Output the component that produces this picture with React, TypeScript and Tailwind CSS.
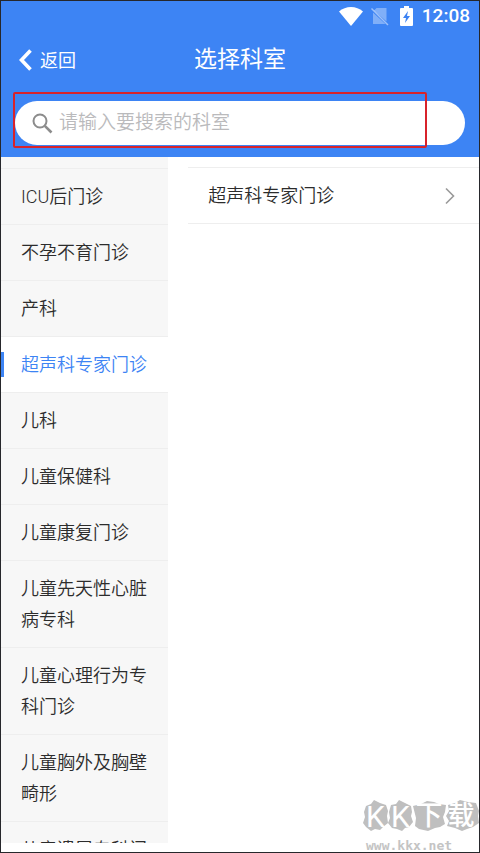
import { useState } from "react";

const departments = [
  "ICU后门诊",
  "不孕不育门诊",
  "产科",
  "超声科专家门诊",
  "儿科",
  "儿童保健科",
  "儿童康复门诊",
  "儿童先天性心脏病专科",
  "儿童心理行为专科门诊",
  "儿童胸外及胸壁畸形",
  "儿童遗尿专科门诊",
];

function StatusBar() {
  return (
    <div className="flex h-[30px] items-center justify-end pr-[9px] text-white">
      <svg width="24" height="19" viewBox="0 0 24 19" fill="currentColor" aria-hidden="true">
        <path d="M0 4.5C3.4 1.6 7.5 0 12 0s8.600 1.600 12 4.500L12 19z" />
      </svg>
      <svg className="ml-2" width="18" height="19" viewBox="0 0 18 19" aria-hidden="true">
        <path d="M5.500 1H15.500V14.500L3 3.500zM2 5.500L14.500 17H2z" fill="#fff" opacity=".35" />
        <path d="M.5 1.500l16.500 16.500" stroke="#fff" strokeWidth="1.400" opacity=".5" />
      </svg>
      <svg className="ml-[11px]" width="13" height="20" viewBox="0 0 13 20" aria-hidden="true">
        <path d="M4 0h5v2h3a1 1 0 0 1 1 1v16a1 1 0 0 1-1 1H1a1 1 0 0 1-1-1V3a1 1 0 0 1 1-1h3z" fill="#fff" />
        <path d="M8 5l-5 7h3l-1 5 5-7H7z" fill="#3c82f3" />
      </svg>
      <span className="ml-[9px] text-[19px] leading-[24px] font-medium">12:08</span>
    </div>
  );
}

function Header() {
  return (
    <header className="shrink-0 bg-[#3d84f4] pb-3">
      <StatusBar />
      <div className="grid h-[58px] grid-cols-3 items-center text-white">
        <button type="button" className="flex items-center gap-2 pl-[18px] text-[18px]">
          <svg width="13" height="24" viewBox="0 0 13 24" fill="none" aria-hidden="true">
            <path d="M11.500 2.500L2.500 12l9 9.500" stroke="currentColor" strokeWidth="3.600" />
          </svg>
          返回
        </button>
        <h1 className="text-center text-[23px]">选择科室</h1>
      </div>
      <div className="relative mx-[14px] mt-3">
        <label className="flex h-11 items-center gap-1.5 rounded-full bg-white pl-[17px]">
          <svg width="21" height="21" viewBox="0 0 21 21" fill="none" stroke="#8c8c8c" aria-hidden="true">
            <circle cx="8" cy="8" r="6.500" strokeWidth="2" />
            <path d="M12.800 12.800L19.500 19.500" strokeWidth="2.600" />
          </svg>
          <input
            type="text"
            aria-label="搜索科室"
            placeholder="请输入要搜索的科室"
            className="min-w-0 flex-1 bg-transparent pr-4 text-[19px] font-[350] text-[#333] outline-none placeholder:text-[#bababc]"
          />
        </label>
        <div className="pointer-events-none absolute -top-[9px] -bottom-[3px] -left-[2px] right-[38px] rounded-xs border-2 border-[#d8232b]" />
      </div>
    </header>
  );
}

function Watermark() {
  return (
    <div className="pointer-events-none absolute right-0 bottom-0 h-[54px] w-[118px] overflow-hidden">
      <svg className="absolute" width="118" height="36" viewBox="0 0 118 36" fill="#bfbfbf" aria-hidden="true">
        <path d="M5 8l5-2 3-4 6 3 6 2 2 6-1 5 1 7-5 4-3 3-5-1-4 2-5-4-3-4 2-6-1-5z" />
        <path d="M30 7l5-1 3-4 6 3 6 3 1 6-1 4 2 6-4 5-4 1-3 3-5-2-5-1-4-5 2-5-1-6z" />
        <path d="M52 8l8-2 6-3 7 1 5 2 7 1-1 7-2 5 2 7-5 3-5 1-7 3-9-2-4-3 1-8z" />
        <path d="M87 7l7-2 5-3 8 2 8 1 3 8-1 5 1 7-6 4-6 2-5 2-7-3-8-2 2-5-3-5 3-5z" />
      </svg>
      <div className="absolute left-[2px] flex h-9 items-center text-[27px] text-white">
        <span className="w-[25px] text-center text-[30px]">K</span>
        <span className="w-[25px] text-center text-[30px]">K</span>
        <span className="w-[32px] text-center font-medium">下</span>
        <span className="w-[32px] text-center font-medium">载</span>
      </div>
      <div className="absolute top-[39px] left-[5px] font-['DejaVu_Sans_Mono'] text-[13px] leading-[18px] font-bold text-[#c4c4c4]">
        www.kkx.net
      </div>
    </div>
  );
}

export default function App() {
  const [selected, setSelected] = useState("超声科专家门诊");

  return (
    <div className="relative flex h-screen flex-col overflow-hidden border border-[#26272b] bg-white font-[Roboto,'Noto_Sans_CJK_SC',sans-serif] text-[#2c2c2c]">
      <Header />
      <main className="mb-[9px] flex min-h-0 flex-1 text-[18px] leading-[31px] font-[350]">
        <nav className="w-[35%] shrink-0 overflow-hidden bg-[#f7f7f7] pt-[11px]">
          {departments.map((name) => (
            <button
              key={name}
              type="button"
              onClick={() => setSelected(name)}
              className={
                name === selected
                  ? "relative block w-full border-t border-[#eee] bg-white px-5 py-3 text-left text-[#3d84f4]"
                  : "relative block w-full border-t border-[#eee] px-5 py-3 text-left"
              }
            >
              {name === selected && (
                <span className="absolute top-[15px] left-0 h-[25px] w-[3px] bg-[#3d84f4]" />
              )}
              {name}
            </button>
          ))}
        </nav>
        <section className="flex-1 pt-[10px] pl-5">
          <button
            type="button"
            className="flex w-full items-center justify-between border-y border-[#eee] py-3 pr-6 pl-5 text-left"
          >
            超声科专家门诊
            <svg width="10" height="18" viewBox="0 0 10 18" fill="none" aria-hidden="true">
              <path d="M1 1.500L8.500 9L1 16.500" stroke="#999" strokeWidth="1.600" />
            </svg>
          </button>
        </section>
      </main>
      <Watermark />
    </div>
  );
}
